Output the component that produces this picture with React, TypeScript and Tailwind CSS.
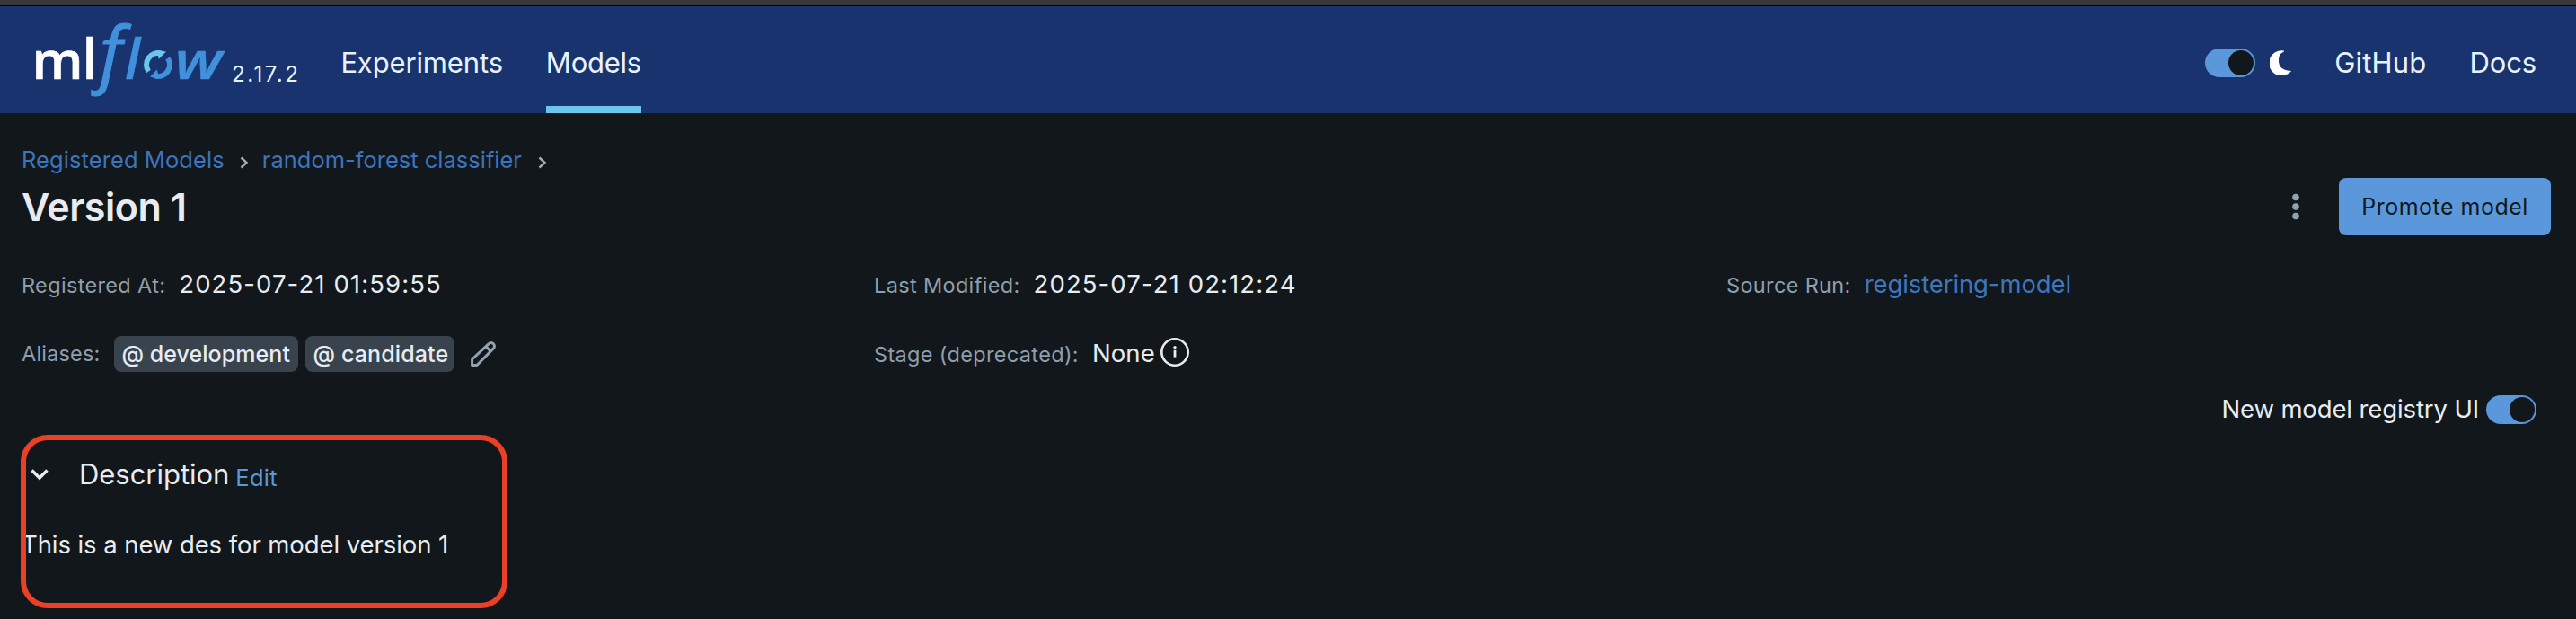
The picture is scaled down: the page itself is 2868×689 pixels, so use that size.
import type { ReactNode } from "react";

function Logo() {
  return (
    <svg width="216" height="88" viewBox="36 22 216 88" className="block shrink-0 overflow-visible font-['Open_Sans',sans-serif]" role="img">
      <g fill="#ffffff">
        <text x="35.4" y="88" fontSize="57" fontWeight="600" textLength="57" lengthAdjust="spacingAndGlyphs" stroke="#ffffff" strokeWidth="0.6">m</text>
        <text x="91.2" y="88" fontSize="62" fontWeight="600" stroke="#ffffff" strokeWidth="0.4">l</text>
      </g>
      <g fill="#4190dc" fontStyle="italic">
        <text x="111" y="88" fontSize="80" fontWeight="400" stroke="#4190dc" strokeWidth="1.2">f</text>
        <text x="139" y="88" fontSize="62" fontWeight="600" stroke="#4190dc" strokeWidth="0.4">l</text>
        <text x="194.5" y="88" fontSize="58" fontWeight="600" textLength="53" lengthAdjust="spacingAndGlyphs" stroke="#4190dc" strokeWidth="0.4">w</text>
      </g>
      <g fill="none" strokeWidth="6">
        <path d="M165.4 79.5 A13 13 0 0 1 179.5 59.5" stroke="#6cc5ea" />
        <path d="M186.8 64.8 A13 13 0 0 1 172 84.4" stroke="#4190dc" />
      </g>
      <path d="M174.5 56 L185 57.6 L176.8 65.8 L175.8 61.5 Z" fill="#6cc5ea" />
      <path d="M176.5 88 L167 85.6 L174.8 77.6 L176 82 Z" fill="#4190dc" />
    </svg>
  );
}

function Toggle() {
  return (
    <span className="flex h-8 w-14 shrink-0 items-center justify-end rounded-full bg-[#5a97db] pr-0.5">
      <span className="size-7 rounded-full bg-[#11171b]" />
    </span>
  );
}

function Field({ label, children, className = "" }: { label: string; children: ReactNode; className?: string }) {
  return (
    <div className={`flex h-10 items-baseline leading-10 whitespace-nowrap ${className}`}>
      <span className="text-[23.5px] tracking-[0.34px] text-[#8f9fae]">{label}</span>
      {children}
    </div>
  );
}

function Crumb({ children }: { children: ReactNode }) {
  return (
    <>
      {children}
      <svg width="10" height="14" viewBox="0 0 10 14" className="mt-1 shrink-0" fill="none" stroke="#a3aeb8" strokeWidth="2.4">
        <path d="M1.5 1.5 L7.5 7 L1.5 12.5" />
      </svg>
    </>
  );
}

export default function App() {
  return (
    <div className="relative h-[689px] w-[2868px] overflow-hidden bg-[#11171b] font-['Inter',sans-serif] text-[#e8ecf0]">
      <div className="h-[7px] border-b border-black bg-[#383838]" />
      <header className="flex h-[119px] items-center bg-[#18336e] pt-[7px] pr-[44px] pl-9 text-[31px] text-[#e8f2fd]">
        <div className="-mt-2 flex items-end">
          <Logo />
          <span className="mb-[11px] ml-1.5 text-[24px] leading-8 tracking-[2.5px]">2.17.2</span>
        </div>
        <nav className="ml-[45px] flex h-full items-center gap-[48px]">
          <a className="tracking-[-0.14px]">Experiments</a>
          <a className="relative flex h-full items-center tracking-[-0.23px]">
            Models
            <span className="absolute inset-x-0 bottom-0 h-2 bg-[#6cc5ea]" />
          </a>
        </nav>
        <div className="ml-auto flex items-center">
          <Toggle />
          <svg width="24" height="28" viewBox="0 0 24 28" className="ml-4" fill="#ffffff">
            <path d="M16 .6 A14 14 0 1 0 24 23.2 C23.2 22.6 10 23.5 10 11.5 C10 6 12 3 16 1.6 Z" />
          </svg>
          <a className="ml-12 tracking-[0.17px]">GitHub</a>
          <a className="ml-12 tracking-[-0.12px]">Docs</a>
        </div>
      </header>

      <main className="px-6 pt-[33px]">
        <div className="flex h-[39px] items-center text-[25.5px] text-[#3d74bb]">
          <Crumb>
            <a className="mr-[17px] tracking-[0.08px]">Registered Models</a>
          </Crumb>
          <span className="w-[15px]" />
          <Crumb>
            <a className="mr-[18px]">random-forest classifier</a>
          </Crumb>
        </div>

        <div className="flex h-16 items-center pr-1">
          <h1 className="text-[43px] font-semibold tracking-[-0.48px]">Version 1</h1>
          <svg width="8" height="30" viewBox="0 0 8 30" className="mr-11 ml-auto" fill="#92a2b0">
            <circle cx="4" cy="4.5" r="3.8" />
            <circle cx="4" cy="15" r="3.8" />
            <circle cx="4" cy="25.5" r="3.8" />
          </svg>
          <button className="h-16 w-[236px] rounded-lg bg-[#5a97db] pt-0.5 text-[25px] tracking-[0.49px] text-[#11171b]">Promote model</button>
        </div>

        <div className="mt-[34px] grid w-[2847px] grid-cols-3 gap-y-[38px]">
          <Field label="Registered At:">
            <span className="ml-[15px] text-[27.5px] tracking-[1.1px]">2025-07-21 01:59:55</span>
          </Field>
          <Field label="Last Modified:">
            <span className="ml-[15px] text-[27.5px] tracking-[1.1px]">2025-07-21 02:12:24</span>
          </Field>
          <Field label="Source Run:">
            <a className="ml-[15px] text-[27.5px] tracking-[-0.1px] text-[#3d76bd]">registering-model</a>
          </Field>
          <div className="flex h-10 items-center">
            <span className="text-[23.5px] tracking-[0.17px] text-[#8f9fae]">Aliases:</span>
            <span className="ml-[16px] flex h-10 w-[205px] items-center rounded-lg bg-[#39434d] pt-0.5 pl-2 text-[25px] font-medium tracking-[0.06px]">@ development</span>
            <span className="ml-2 flex h-10 w-[166px] items-center rounded-lg bg-[#39434d] pt-0.5 pl-2 text-[25px] font-medium tracking-[0.12px]">@ candidate</span>
            <svg width="28" height="28" viewBox="0 0 28 28" className="ml-[18px]" fill="none" stroke="#92a2b0" strokeWidth="3">
              <path d="M1.6 26.5 V20 L20.2 2.7 A3.6 3.6 0 0 1 25.4 7.9 L7 26.5 Z" strokeLinejoin="round" />
              <path d="M17 5.8 L22.3 11.1" />
            </svg>
          </div>
          <Field label="Stage (deprecated):" className="-mt-px">
            <span className="ml-[15px] text-[27.5px] tracking-[0.1px]">None</span>
            <svg width="32" height="32" viewBox="0 0 32 32" className="mt-[3px] ml-[6px] self-start" fill="none" stroke="#e8ecf0">
              <circle cx="16" cy="16" r="14.7" strokeWidth="2.6" />
              <path d="M16 13.8 V21.6" strokeWidth="2.8" />
              <circle cx="16" cy="10.6" r="1.7" fill="#e8ecf0" stroke="none" />
            </svg>
          </Field>
        </div>

        <div className="mt-[26px] flex h-8 items-center justify-end pr-5">
          <span className="mr-[8px] text-[27.5px] tracking-[-0.12px]">New model registry UI</span>
          <Toggle />
        </div>

        <section>
          <div className="mt-9 flex h-10 items-baseline leading-[40px]">
            <svg width="20" height="13" viewBox="0 0 20 13" className="mr-[34px] ml-[10px] self-center" fill="none" stroke="#e8ecf0" strokeWidth="3.4">
              <path d="M1.5 1.5 L10 10 L18.5 1.5" />
            </svg>
            <h2 className="text-[31px] tracking-[-0.04px]">Description</h2>
            <a className="relative top-0.5 ml-[7px] text-[25.5px] tracking-[0.29px] text-[#5a97db]">Edit</a>
          </div>
          <p className="mt-[38px] text-[27.5px] leading-10 tracking-[-0.08px]">This is a new des for model version 1</p>
        </section>
      </main>

      <div className="absolute top-[484px] left-[23px] h-[193px] w-[542px] rounded-[30px] border-[6px] border-[#ea4026]" />
    </div>
  );
}
